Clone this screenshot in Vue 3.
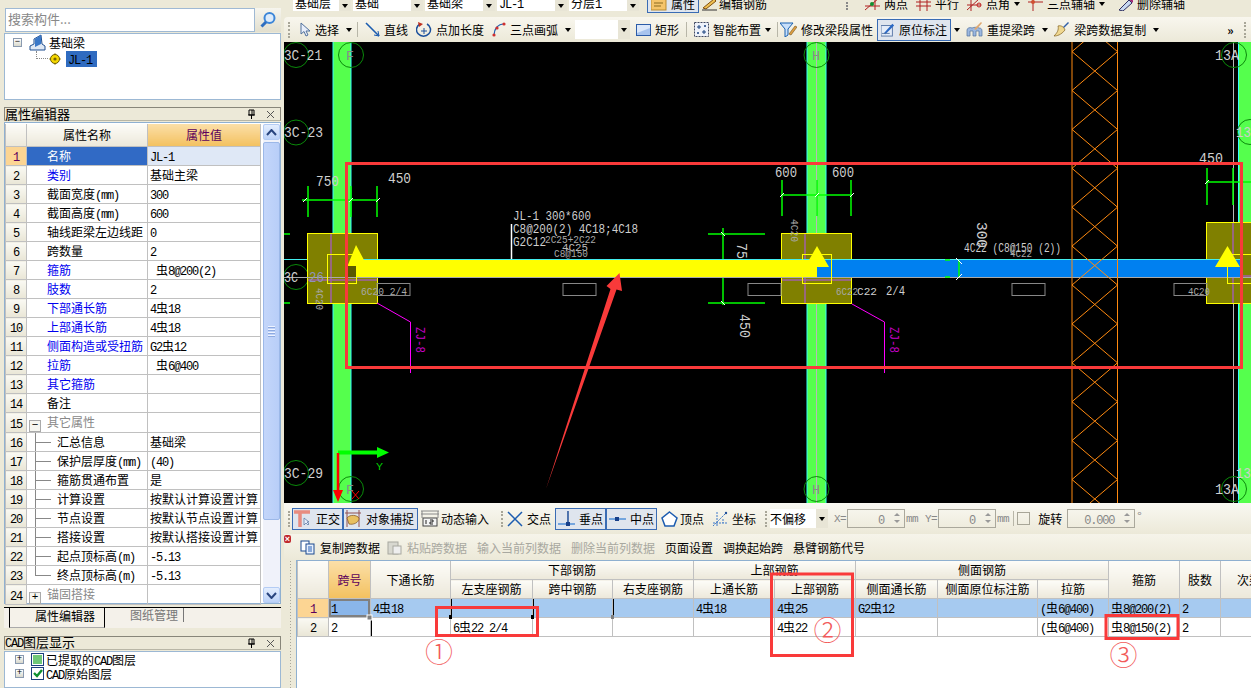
<template>
  <div class="app">
    <!-- left dock -->
    <aside class="left">
      <div class="search-row">
        <div class="search-input">搜索构件...</div>
        <div class="search-btn">
          <svg width="18" height="18" viewBox="0 0 18 18"><circle cx="10.5" cy="7" r="5" fill="#dcebfb" stroke="#3c86d8" stroke-width="2" /><path d="M7 11 2.5 15.5" stroke="#2f6fc0" stroke-width="3" /></svg>
        </div>
      </div>
      <div class="tree-box">
        <div class="tree-root">
          <span class="exp">−</span>
          <svg class="beam-ico" width="17" height="17" viewBox="0 0 17 17"><path d="M1 16V12L5 10V5L12 1 13 10 16 12V16Z" fill="#dfe8f4" stroke="#1f4f90" /><path d="M6 5 12 1V10L6 13Z" fill="#3a78c8" /></svg>
          <span>基础梁</span>
        </div>
        <div class="tree-child">
          <span class="dots"></span>
          <svg width="12" height="12" viewBox="0 0 12 12"><circle cx="6" cy="6" r="4.5" fill="#f5d800" stroke="#6b5a00" /><circle cx="6" cy="6" r="1.6" fill="#7a6400" /><path d="M6 0V12M0 6H12" stroke="#8a7400" stroke-width=".8" stroke-dasharray="1.5 9" /></svg>
          <span class="tree-sel"><Tx s="JL-1" /></span>
        </div>
      </div>

      <div class="dock-title dock-title-a">
        <span>属性编辑器</span>
        <span class="dock-btns">
          <svg width="9" height="10" viewBox="0 0 9 10"><path d="M2 1H7V6H2ZM1 6H8M4.5 6V10" fill="none" stroke="#000" /><path d="M5 1V6" stroke="#000" /></svg>
          <svg width="9" height="9" viewBox="0 0 9 9"><path d="M1 1 8 8M8 1 1 8" stroke="#555" /></svg>
        </span>
      </div>

      <div class="grid-box">
        <table class="pgrid">
          <colgroup><col class="pc-a" /><col class="pc-b" /><col class="pc-c" /></colgroup>
          <thead>
            <tr>
              <th class="corner"></th>
              <th>属性名称</th>
              <th class="sel-head">属性值</th>
            </tr>
          </thead>
          <tbody>
            <tr v-for="(p, i) in props" :key="i">
              <td class="rh" :class="{ 'rh-sel': i === 0 }"><Tx :s="i + 1" /></td>
              <td
                class="pn"
                :class="{ blue: p.blue, gray: p.group, sub: p.sub, last: p.last, named: i === 0 }"
              >
                <span v-if="p.group" class="gbox">{{ p.group }}</span>
                <Tx :s="p.n" />
              </td>
              <td class="pv" :class="{ named: i === 0 }"><Tx :s="p.v" /></td>
            </tr>
          </tbody>
        </table>
        <div class="vscroll">
          <div class="sb-btn"><svg width="11" height="7" viewBox="0 0 11 7"><path d="M1 6 5.5 1 10 6" fill="none" stroke="#29457f" stroke-width="2" /></svg></div>
          <div class="sb-thumb"><span></span><span></span><span></span><span></span></div>
          <div class="sb-space"></div>
          <div class="sb-btn"><svg width="11" height="7" viewBox="0 0 11 7"><path d="M1 1 5.5 6 10 1" fill="none" stroke="#29457f" stroke-width="2" /></svg></div>
        </div>
      </div>

      <div class="tabs">
        <div class="tab tab-on">属性编辑器</div>
        <div class="tab tab-off">图纸管理</div>
      </div>

      <div class="dock-title dock-title-b">
        <span><Tx s="CAD图层显示" /></span>
        <span class="dock-btns">
          <svg width="9" height="10" viewBox="0 0 9 10"><path d="M2 1H7V6H2ZM1 6H8M4.5 6V10" fill="none" stroke="#000" /><path d="M5 1V6" stroke="#000" /></svg>
          <svg width="9" height="9" viewBox="0 0 9 9"><path d="M1 1 8 8M8 1 1 8" stroke="#555" /></svg>
        </span>
      </div>
      <div class="cad-box">
        <div class="cad-row">
          <span class="exp">+</span><span class="cad-check"><i class="cad-fill"></i></span><span><Tx s="已提取的CAD图层" /></span>
        </div>
        <div class="cad-row">
          <span class="exp">+</span>
          <span class="cad-check">
            <svg width="10" height="10" viewBox="0 0 10 10"><path d="M1 5 4 8 9 2" fill="none" stroke="#109030" stroke-width="2.4" /></svg>
          </span><span><Tx s="CAD原始图层" /></span>
        </div>
      </div>
    </aside>

    <main class="right">
      <!-- toolbars clipped by the window top -->
      <div class="bar-clip">
        <div v-for="s in topSelects" :key="s.t" class="tsel" :class="s.c">
          <span><Tx :s="s.t" /></span><b class="drop"><i></i></b>
        </div>
        <div class="ti ti-on attr">
          <svg width="16" height="14" viewBox="0 0 16 14"><rect y="1" width="15" height="12" fill="#f5c46a" stroke="#b98a30" /><path d="M3 6H12M3 9H10" stroke="#8a6a20" /></svg>属性
        </div>
        <div class="ti edit">
          <svg width="16" height="14" viewBox="0 0 16 14"><path d="M1 11 12 2 14 4 4 12Z" fill="#f0c050" stroke="#805010" /><path d="M0 13H15" stroke="#333" /></svg>编辑钢筋
        </div>
        <span class="vdots"></span>
        <div class="ti two">
          <svg width="15" height="14" viewBox="0 0 15 14"><path d="M0 13 14 1M10 0V13M0 9H15" stroke="#b02020" fill="none" /><circle cx="7" cy="7" r="2" fill="#109030" /></svg>两点
        </div>
        <div class="ti">
          <svg width="15" height="14" viewBox="0 0 15 14"><path d="M0 5H15M0 9H15M4 0V14M11 0V14" stroke="#b02020" /></svg>平行
        </div>
        <div class="ti">
          <svg width="15" height="14" viewBox="0 0 15 14"><path d="M0 13 12 2M4 0V14M0 8H14" stroke="#b02020" fill="none" /><circle cx="12" cy="8" r="2" fill="none" stroke="#c02020" /></svg>点角<u class="arr"></u>
        </div>
        <div class="ti">
          <svg width="15" height="14" viewBox="0 0 15 14"><path d="M5 0V14M0 5H15" stroke="#b02020" /><circle cx="5" cy="5" r="2" fill="#d05030" /></svg>三点辅轴<u class="arr"></u>
        </div>
        <div class="ti del">
          <svg width="15" height="14" viewBox="0 0 15 14"><path d="M1 13 11 3 14 6 5 14Z" fill="#c8d8f0" stroke="#303060" /><path d="M10 0 15 5" stroke="#a02070" stroke-width="2" /></svg>删除辅轴
        </div>
      </div>

      <div class="bar-main">
        <span class="grip"></span>
        <div class="ti ti-sel">
          <svg width="12" height="16" viewBox="0 0 12 16"><path d="M2 1V12L5 9.500 7 14 9 13 7 9H11Z" fill="#e8eefa" stroke="#50709c" /></svg>
          <span>选择</span><u class="arr a9"></u>
        </div>
        <span class="vsep"></span>
        <div class="ti">
          <svg width="15" height="15" viewBox="0 0 15 15"><path d="M1 1 14 14" stroke="#1c5cb0" stroke-width="1.600" /><path d="M14 14 13 9M14 14 9 13" stroke="#1c5cb0" /></svg>直线
        </div>
        <div class="ti">
          <svg width="16" height="16" viewBox="0 0 16 16"><path d="M4 2A7 6.500 0 1 0 11 2" fill="none" stroke="#1a4f9c" stroke-width="1.500" /><path d="M2 0 7 2 3 5" fill="#c03020" /><path d="M8 6V12M5 9H11" stroke="#1a4f9c" /></svg>点加长度
        </div>
        <div class="ti">
          <svg width="14" height="15" viewBox="0 0 14 15"><path d="M2 13C2 7 6 2 12 2" fill="none" stroke="#2060b0" stroke-width="1.200" /><circle cx="2" cy="13" r="1.600" fill="#d03030" /><circle cx="5" cy="6" r="1.600" fill="#d03030" /><circle cx="12" cy="2" r="1.600" fill="#d03030" /></svg>
          <span>三点画弧</span><u class="arr a9"></u>
        </div>
        <div class="tb-combo"><b class="drop"><i></i></b></div>
        <div class="ti">
          <svg width="15" height="12" viewBox="0 0 15 12"><rect x=".5" y=".5" width="14" height="11" fill="#a8c4ee" stroke="#2c5ca8" /><path d="M1 1H14V4L1 9Z" fill="#dce8fa" /></svg>矩形
        </div>
        <span class="vsep"></span>
        <div class="ti">
          <svg width="15" height="15" viewBox="0 0 15 15"><rect x=".5" y=".5" width="14" height="14" fill="#eef2fa" stroke="#404860" stroke-dasharray="2 1" /><path d="M5 3V7M3 5H7M10 8V12M8 10H12M11 3V5M10 4H12M4 10V12M3 11H5" stroke="#18407c" /></svg>
          智能布置<u class="arr"></u>
        </div>
        <span class="vsep v2"></span>
        <div class="ti m3">
          <svg width="17" height="15" viewBox="0 0 17 15"><path d="M0 1H13L8 7V13L5 15V7Z" fill="#c8e0fa" stroke="#1860b0" /><path d="M9 12 15 4 17 5 11 13Z" fill="#e0a040" stroke="#705020" stroke-width=".6" /></svg>修改梁段属性
        </div>
        <div class="ti ti-on yw">
          <svg width="16" height="15" viewBox="0 0 16 15"><rect y="3" width="13" height="12" fill="#e4ecf8" stroke="#5070a0" /><path d="M3 12 13 1 15 3 5 13Z" fill="#2a68c4" /><path d="M1 12H10" stroke="#5070a0" /></svg>原位标注
        </div>
        <u class="arr solo"></u>
        <div class="ti">
          <svg width="17" height="15" viewBox="0 0 17 15"><path d="M1 14V8C1 6 4 5 6 6 8 5 12 5 13 6 15 6 16 7 16 9V14H13V9H10V14H7V9H4V14Z" fill="#9cb8e0" stroke="#50709c" stroke-width=".7" /><path d="M8 7 15 0 16 1 10 8Z" fill="#e0a870" /></svg>
          <span>重提梁跨</span><u class="arr a9"></u>
        </div>
        <div class="ti m3">
          <svg width="17" height="15" viewBox="0 0 17 15"><path d="M10 5 15 0 16 1 11 6Z" fill="#2f5fa8" /><path d="M5 4C8 3 11 5 12 8 8 13 4 14 1 14 4 11 6 8 5 4Z" fill="#f0d890" stroke="#806020" stroke-width=".7" /></svg>
          <span>梁跨数据复制</span><u class="arr a9"></u>
        </div>
        <span class="more">»</span>
        <span class="grip end"></span>
      </div>

      <!-- drawing canvas, coordinates are window pixels -->
      <svg class="canvas" width="967" height="461" viewBox="284 42 967 461">
        <rect x="284" y="42" width="967" height="461" fill="#000" />
        <g v-for="c in cols" :key="c.x">
          <rect :x="c.x" y="42" :width="c.w" height="461" fill="#55ff4d" />
          <path :d="`M${c.x} 42V503M${c.x + c.w} 42V503`" stroke="#3ff" fill="none" />
        </g>
        <path d="M816.500 42V503M1233.500 42V503" stroke="#b8b8b8" />
        <path d="M284 259.500H1251" stroke="#4ee" />
        <path d="M284 277.500H1251" stroke="#aaa" />

        <g fill="none" stroke="#0a8a0a">
          <circle v-for="[x, y, r] in bubbles" :key="x + '-' + y" :cx="x" :cy="y" :r="r" />
        </g>

        <!-- columns caps -->
        <g v-for="b in blocks" :key="b.x">
          <rect :x="b.x" :y="b.y" :width="b.w" :height="b.h" fill="#808000" stroke="#ff0" />
          <path :d="b.p" stroke="#a060a8" stroke-width="1.500" fill="none" />
        </g>

        <!-- beams -->
        <rect x="356" y="260" width="461" height="17" fill="#ff0" />
        <rect x="817" y="260" width="423" height="17" fill="#0080f0" />
        <path d="M284 277.500H1251" stroke="#aaa" />
        <path d="M356 259.500H1240" stroke="#4ee" />
        <g fill="none" stroke="#ff0">
          <rect v-for="b in blocks" :key="b.ix" :x="b.ix" y="254.500" :width="b.iw" height="29" />
        </g>
        <rect x="348" y="266" width="8" height="11" fill="#5a5a00" />
        <path d="M356 245 347.500 266H356V260H364Z" fill="#ff0" />
        <path d="M817 246 805 267H829Z" fill="#ff0" />
        <path d="M1227.500 246 1215 267H1240Z" fill="#ff0" />

        <!-- hatch -->
        <g stroke="#ff8a10" fill="none">
          <path d="M1072 42V503M1117.500 42V503" />
          <path v-for="(d, i) in hatch" :key="i" :d="d" />
        </g>

        <!-- dimensions -->
        <g stroke="#0f0" stroke-width="1.500" fill="none">
          <path d="M302 200H378M308 186V217M351 186V217M377 186V217" />
          <path d="M781 195H852M782 180V216M817 180V216M851 180V216" />
          <path d="M1206 182H1251M1207 168V205M1233 168V205" />
          <path d="M708 234H765M708 303H765M723 228V259M723 278V305M284 234H290M284 303H290" />
          <path d="M945 260H950M945 277H950M959 260V277" />
        </g>
        <g stroke="#fff">
          <path d="M303 202 307 198M349 202 353 198M376 202 380 198M780 197 784 193M815 197 819 193M850 197 854 193M1205 184 1209 180M721 232 725 236M721 301 725 305M956 258 962 264M956 280 962 274" />
          <path d="M511.500 224V259" stroke-width="1.500" />
        </g>

        <!-- rebar marks boxes -->
        <g fill="none" stroke="#888">
          <rect v-for="x in markBoxes" :key="x" :x="x" y="283.500" width="33" height="12" />
        </g>

        <!-- ZJ leaders -->
        <path d="M377 303 410.500 322V373M852 304 884.500 322V373" fill="none" stroke="#f0f" />

        <text
          v-for="(t, i) in labels"
          :key="i"
          :x="t.x"
          :y="t.y"
          :font-size="t.fs || 12"
          :fill="t.c || '#cfcfcf'"
          :textLength="t.w"
          lengthAdjust="spacingAndGlyphs"
          :transform="t.r ? `rotate(90 ${t.x} ${t.y})` : null"
          class="cad-text"
        >{{ t.s }}</text>

        <!-- ucs -->
        <path d="M338 452.500H378" stroke="#0f0" stroke-width="4" />
        <path d="M377 447 389 452.500 377 458Z" fill="#0f0" />
        <path d="M338 453V492" stroke="#f00" stroke-width="2.500" />
        <path d="M333 490 338 502 343 490Z" fill="#f00" />
        <path d="M352 491 359 499M359 491 352 499" stroke="#f00" />

        <!-- markup -->
        <rect x="346.500" y="163.500" width="895" height="204" fill="none" stroke="#f93a3a" stroke-width="3" />
        <path d="M546 489 610.500 289 606.500 286 619.500 273 622 291 616.500 289.500Z" fill="#f93a3a" />
      </svg>

      <!-- snap bar -->
      <div class="bar-snap">
        <span class="grip"></span>
        <div class="ti ti-on s-a">
          <svg width="18" height="17" viewBox="0 0 18 17"><path d="M0 2H16M6 2V17" stroke="#e88c80" stroke-width="3.500" /><path d="M10 8V15L12 13 14 15 15 14 13 12H15Z" fill="#e8eefa" stroke="#50709c" stroke-width=".7" /></svg>正交
        </div>
        <div class="ti ti-on s-b">
          <svg width="18" height="17" viewBox="0 0 18 17"><path d="M1 3H17M3 0V17M15 0V17" stroke="#905050" /><path d="M3 8C6 4 13 5 15 8 15 13 9 15 5 14Z" fill="#e8c060" stroke="#805020" stroke-width=".7" /></svg>对象捕捉
        </div>
        <div class="ti s-c">
          <svg width="18" height="17" viewBox="0 0 18 17"><path d="M0 1H18M0 4H18" stroke="#888" /><path d="M1 1V8M17 1V8" stroke="#888" /><rect x="2" y="8" width="14" height="8" fill="#f4f4f4" stroke="#444" /><path d="M5 10V14M9 10H12V12H9V14H12" stroke="#222" fill="none" /></svg>动态输入
        </div>
        <span class="grip g2"></span>
        <div class="ti">
          <svg width="16" height="16" viewBox="0 0 16 16"><path d="M1 1 15 15M15 1 1 15" stroke="#1c5cb0" stroke-width="1.500" /></svg>交点
        </div>
        <div class="ti ti-on s-d">
          <svg width="17" height="16" viewBox="0 0 17 16"><path d="M0 13H17" stroke="#5090d8" stroke-width="1.500" /><path d="M10 0V13" stroke="#204f98" stroke-width="1.500" /><rect x="8" y="11" width="4" height="4" fill="#18408a" /></svg>垂点
        </div>
        <div class="ti ti-on s-d">
          <svg width="17" height="16" viewBox="0 0 17 16"><path d="M0 8H17" stroke="#5090d8" stroke-width="1.500" /><rect x="6" y="6" width="4" height="4" fill="#18408a" /></svg>中点
        </div>
        <div class="ti s-e">
          <svg width="17" height="16" viewBox="0 0 17 16"><path d="M8.500 1 16 7 13 15H4L1 7Z" fill="#fff" stroke="#1c5cb0" stroke-width="1.500" /></svg>顶点
        </div>
        <div class="ti s-f">
          <svg width="17" height="16" viewBox="0 0 17 16"><path d="M1 12H16M5 1V16M1 15 14 2M11 8V12" stroke="#3e78c8" stroke-dasharray="2 1" fill="none" /><circle cx="14" cy="2" r="1.200" fill="#204f98" /></svg>坐标
        </div>
        <span class="grip g3"></span>
        <div class="offset"><span>不偏移</span><b class="drop"><i></i></b></div>
        <span class="mut lat-m xl">X=</span>
        <div class="spin"><span class="lat">0</span><em></em></div>
        <span class="mut lat-m">mm</span>
        <span class="mut lat-m yl">Y=</span>
        <div class="spin"><span class="lat">0</span><em></em></div>
        <span class="mut lat-m">mm</span>
        <span class="vsep v3"></span>
        <span class="chk"></span>
        <span class="rot">旋转</span>
        <div class="spin spin-r"><span class="lat">0.000</span><em></em></div>
        <span class="mut deg">°</span>
      </div>

      <!-- table toolbar -->
      <div class="bar-table">
        <span class="close-x">×</span>
        <span class="ta on">
          <svg width="16" height="15" viewBox="0 0 16 15"><rect x="1" y="1" width="8" height="10" fill="#fff" stroke="#1c4a90" /><rect x="6" y="4" width="8" height="10" fill="#e8f0fc" stroke="#1c4a90" /><path d="M8 7H12M8 9H12M8 11H12" stroke="#2a62b8" /></svg>复制跨数据
        </span>
        <span class="ta off pa">
          <svg width="16" height="15" viewBox="0 0 16 15"><rect x="1" y="2" width="10" height="12" fill="#d8d8d0" stroke="#a8a8a0" /><rect x="6" y="6" width="8" height="8" fill="#eee" stroke="#a8a8a0" /></svg>粘贴跨数据
        </span>
        <span class="ta off">输入当前列数据</span>
        <span class="ta off">删除当前列数据</span>
        <span class="ta on">页面设置</span>
        <span class="ta on">调换起始跨</span>
        <span class="ta on">悬臂钢筋代号</span>
      </div>

      <div class="table-zone">
        <div class="splitter"></div>
        <div class="table-wrap">
          <table class="span-table">
            <colgroup><col v-for="w in colWidths" :key="w.k" :style="{ width: w.v + 'px' }" /></colgroup>
            <thead>
              <tr>
                <th rowspan="2"></th>
                <th rowspan="2" class="sel-head">跨号</th>
                <th rowspan="2">下通长筋</th>
                <th colspan="3">下部钢筋</th>
                <th colspan="2">上部钢筋</th>
                <th colspan="3">侧面钢筋</th>
                <th rowspan="2">箍筋</th>
                <th rowspan="2">肢数</th>
                <th rowspan="2" class="cut"><span>次梁加筋</span></th>
              </tr>
              <tr>
                <th>左支座钢筋</th>
                <th>跨中钢筋</th>
                <th>右支座钢筋</th>
                <th>上通长筋</th>
                <th>上部钢筋</th>
                <th>侧面通长筋</th>
                <th>侧面原位标注筋</th>
                <th>拉筋</th>
              </tr>
            </thead>
            <tbody>
              <tr v-for="(r, i) in spans" :key="i" :class="{ on: i === 0 }">
                <td class="rh" :class="{ 'rh-sel': i === 0 }"><Tx :s="i + 1" /></td>
                <td :class="{ cur: i === 0 }"><Tx :s="i + 1" /></td>
                <td
                  v-for="(v, j) in r"
                  :key="j"
                  :class="{ tick: i === 0 ? j === 1 || j === 2 || j === 3 : j === 0 }"
                ><Tx :s="v" /></td>
              </tr>
            </tbody>
          </table>
        </div>
      </div>
    </main>

    <!-- hand-drawn markup on top of the table -->
    <svg class="markup" width="1251" height="688" viewBox="0 0 1251 688">
      <rect x="367" y="615" width="5" height="5" fill="#808080" stroke="#fff" />
      <rect x="449" y="615" width="3" height="4" fill="#000" />
      <rect x="531" y="615" width="3" height="4" fill="#000" />
      <rect x="611" y="615" width="3" height="4" fill="#808080" />
      <g fill="none" stroke="#f93a3a" stroke-width="3">
        <rect x="436.500" y="607.500" width="101" height="28" />
        <rect x="771.500" y="574" width="81" height="81.500" />
        <rect x="1106" y="615.500" width="72" height="23" />
      </g>
      <g class="circled" fill="#f25a5a">
        <text x="425" y="663">①</text>
        <text x="813.500" y="641">②</text>
        <text x="1109.500" y="666">③</text>
      </g>
    </svg>
  </div>
</template>

<script setup>
import { h } from "vue";

// cjk and latin sit at different widths so the latin comes out half-width
const Tx = ({ s }) =>
  String(s)
    .split(/([\x20-\x7e]+)/)
    .filter(Boolean)
    .map((p) => (/^[\x20-\x7e]+$/.test(p) ? h("span", { class: "lat" }, p) : p));
Tx.props = ["s"];

const props = [
  { n: "名称", v: "JL-1" },
  { n: "类别", v: "基础主梁", blue: true },
  { n: "截面宽度(mm)", v: "300" },
  { n: "截面高度(mm)", v: "600" },
  { n: "轴线距梁左边线距", v: "0" },
  { n: "跨数量", v: "2" },
  { n: "箍筋", v: " 虫8@200(2)", blue: true },
  { n: "肢数", v: "2", blue: true },
  { n: "下部通长筋", v: "4虫18", blue: true },
  { n: "上部通长筋", v: "4虫18", blue: true },
  { n: "侧面构造或受扭筋", v: "G2虫12", blue: true },
  { n: "拉筋", v: " 虫6@400", blue: true },
  { n: "其它箍筋", v: "", blue: true },
  { n: "备注", v: "" },
  { n: "其它属性", v: "", group: "−" },
  { n: "汇总信息", v: "基础梁", sub: true },
  { n: "保护层厚度(mm)", v: "(40)", sub: true },
  { n: "箍筋贯通布置", v: "是", sub: true },
  { n: "计算设置", v: "按默认计算设置计算", sub: true },
  { n: "节点设置", v: "按默认节点设置计算", sub: true },
  { n: "搭接设置", v: "按默认搭接设置计算", sub: true },
  { n: "起点顶标高(m)", v: "-5.13", sub: true },
  { n: "终点顶标高(m)", v: "-5.13", sub: true, last: true },
  { n: "锚固搭接", v: "", group: "+" },
];

const topSelects = [
  { t: "基础层", c: "s1" },
  { t: "基础", c: "" },
  { t: "基础梁", c: "" },
  { t: "JL-1", c: "" },
  { t: "分层1", c: "" },
];

const cols = [
  { x: 333, w: 18 },
  { x: 807, w: 19 },
  { x: 1238.5, w: 13 },
];

const bubbles = [
  [296, 55, 12.5],
  [296, 132.5, 12.5],
  [296, 277, 12.5],
  [296, 473, 12.5],
  [351, 55, 12.5],
  [816.5, 55, 12.5],
  [351, 489, 12.5],
  [816.5, 489, 12.5],
  [1234, 55, 12.5],
  [1250, 132, 12.5],
  [1234, 489, 12.5],
];

const blocks = [
  { x: 307.5, y: 233.5, w: 70, h: 70, ix: 327.5, iw: 29, p: "M331 234V303M308 280H377" },
  { x: 781.5, y: 233.5, w: 70, h: 70, ix: 802.5, iw: 29, p: "M805 234V303M782 280H851" },
  { x: 1206.5, y: 222.5, w: 50, h: 81, ix: 1227.5, iw: 30, p: "M1233 223V303M1207 276H1251" },
];

const markBoxes = [377, 563, 748, 1012, 1174];

// diamond lattice of the hatched area
const hatch = [];
for (let k = -1; k < 12; k++) {
  const a = 51.6 + 38.9 * k;
  const b = a + 38.9;
  hatch.push(`M1072 ${a}L1117.5 ${b}`, `M1117.5 ${a}L1072 ${b}`);
}

const labels = [
  { s: "3C-21", x: 284, y: 60, fs: 14, w: 38 },
  { s: "3C-23", x: 284, y: 137, fs: 14, w: 39 },
  { s: "3C", x: 284, y: 282, fs: 14, w: 14 },
  { s: "26", x: 309, y: 282, fs: 14, w: 15, c: "#8f93b8" },
  { s: "3C-29", x: 284, y: 478, fs: 14, w: 39 },
  { s: "F", x: 346, y: 60, fs: 13, w: 8, c: "#8a8a8a" },
  { s: "H", x: 812, y: 60, fs: 13, w: 8, c: "#8a8a8a" },
  { s: "F", x: 346, y: 494, fs: 13, w: 8, c: "#8a8a8a" },
  { s: "H", x: 812, y: 494, fs: 13, w: 8, c: "#8a8a8a" },
  { s: "13A", x: 1215, y: 60, fs: 14, w: 24 },
  { s: "13", x: 1236, y: 137, fs: 14, w: 15 },
  { s: "13", x: 1236, y: 478, fs: 14, w: 15 },
  { s: "13A", x: 1215, y: 494, fs: 14, w: 24 },
  { s: "750", x: 316, y: 186, fs: 14, w: 23 },
  { s: "450", x: 388, y: 183, fs: 14, w: 23 },
  { s: "600", x: 775, y: 177, fs: 14, w: 22 },
  { s: "600", x: 832, y: 177, fs: 14, w: 22 },
  { s: "450", x: 1199, y: 163, fs: 14, w: 24 },
  { s: "JL-1 300*600", x: 513, y: 220, w: 78 },
  { s: "C8@200(2) 4C18;4C18", x: 513, y: 233, w: 125 },
  { s: "G2C12", x: 513, y: 246, w: 33 },
  { s: "2C25+2C22", x: 545, y: 243, fs: 11, w: 51, c: "#a8a8a8" },
  { s: "4C25", x: 562, y: 251, fs: 11, w: 26, c: "#bbb" },
  { s: "C8@150", x: 554, y: 257, fs: 11, w: 34, c: "#a8a8a8" },
  { s: "6C20 2/4", x: 361, y: 295, fs: 11, w: 46, c: "#a8a8a8" },
  { s: "4C20", x: 316, y: 288, fs: 11, w: 22, r: true, c: "#a8a8a8" },
  { s: "4C20", x: 791, y: 219, fs: 11, w: 23, r: true, c: "#a8a8a8" },
  { s: "6C22", x: 836, y: 295, fs: 11, w: 22, c: "#a8a8a8" },
  { s: "C22", x: 857, y: 295, fs: 11, w: 20, c: "#d0d0d0" },
  { s: "2/4", x: 886, y: 295, w: 19 },
  { s: "4C22 (C8@150 (2))", x: 964, y: 252, w: 97 },
  { s: "4C22", x: 1010, y: 257, fs: 11, w: 22, c: "#a8a8a8" },
  { s: "300", x: 977, y: 222, fs: 14, w: 26, r: true },
  { s: "4C20", x: 1188, y: 295, fs: 11, w: 22, c: "#a8a8a8" },
  { s: "75", x: 737, y: 243, fs: 14, w: 16, r: true },
  { s: "450", x: 740, y: 314, fs: 14, w: 24, r: true },
  { s: "ZJ-8", x: 416, y: 327, fs: 12, w: 26, r: true, c: "#c800c8" },
  { s: "ZJ-8", x: 890, y: 327, fs: 12, w: 26, r: true, c: "#c800c8" },
  { s: "Y", x: 376, y: 470, fs: 11, w: 7, c: "#0c0" },
];

const colWidths = [31, 42, 80, 82, 80, 81, 81, 81, 82, 100, 71, 71, 41, 31].map((v, k) => ({ k, v }));

const spans = [
  ["4虫18", "", "", "", "4虫18", "4虫25", "G2虫12", "", "(虫6@400)", "虫8@200(2)", "2", ""],
  ["", "6虫22 2/4", "", "", "", "4虫22", "", "", "(虫6@400)", "虫8@150(2)", "2", ""],
];
</script>

<style>
body {
  margin: 0;
  overflow: hidden;
}
.lat {
  font-family: "Liberation Mono", monospace;
  font-size: 12px;
  line-height: 1;
  letter-spacing: -1.2px;
  white-space: pre;
}
</style>

<style scoped>
.app {
  position: relative;
  display: flex;
  width: 1251px;
  height: 688px;
  overflow: hidden;
  background: #ece9d8;
  font: 12px "Noto Sans CJK SC", sans-serif;
  color: #000;
}
.left {
  width: 284px;
  flex: none;
  box-sizing: border-box;
  padding: 8px 3px 0 4px;
  display: flex;
  flex-direction: column;
}
.search-row {
  display: flex;
  height: 24px;
}
.search-input {
  width: 250px;
  margin-left: 1px;
  box-sizing: border-box;
  border: 1px solid #9fb9d4;
  background: #fff;
  color: #888;
  font-size: 13px;
  line-height: 19px;
  padding-left: 2px;
}
.search-btn {
  flex: 1;
  display: flex;
  align-items: center;
  justify-content: center;
  background: linear-gradient(#f6f5ee, #e2dfce);
}
.tree-box {
  height: 67px;
  margin-top: 1px;
  box-sizing: border-box;
  border: 1px solid #9cb8d4;
  background: #fff;
}
.tree-root {
  display: flex;
  align-items: center;
  height: 17px;
  padding-left: 8px;
}
.exp {
  display: inline-block;
  box-sizing: border-box;
  width: 9px;
  height: 9px;
  border: 1px solid #8a9ab0;
  background: linear-gradient(#fff, #d8d8cc);
  font: 9px/7px "Liberation Mono", monospace;
  text-align: center;
  color: #000;
  flex: none;
}
.beam-ico {
  margin: 0 3px 0 7px;
}
.tree-child {
  display: flex;
  align-items: center;
  height: 16px;
  padding-left: 31px;
}
.dots {
  width: 12px;
  height: 8px;
  margin-top: -8px;
  margin-right: 1px;
  border-left: 1px dotted #888;
  border-bottom: 1px dotted #888;
  flex: none;
  box-sizing: border-box;
}
.tree-sel {
  background: #2f6bc0;
  margin-left: 5px;
  width: 31px;
  height: 16px;
  line-height: 16px;
  padding-left: 2px;
  box-sizing: border-box;
}
.dock-title {
  display: flex;
  justify-content: space-between;
  align-items: center;
  height: 14px;
  box-sizing: border-box;
  border: 1px solid #88867a;
  border-bottom-color: #b8b6a6;
  font-size: 13px;
  line-height: 12px;
}
.dock-title-a {
  margin-top: 7px;
}
.dock-btns {
  display: flex;
  gap: 10px;
  align-items: center;
  padding-right: 5px;
}
.grid-box {
  position: relative;
  height: 482px;
  margin-top: 1px;
  box-sizing: border-box;
  border: 1px solid #8fb0d0;
  background: #fff;
  display: flex;
  padding-top: 1px;
}
.pgrid {
  width: 255px;
  table-layout: fixed;
  border-collapse: collapse;
  align-self: flex-start;
}
.pc-a {
  width: 21px;
}
.pc-b {
  width: 121px;
}
.pc-c {
  width: 113px;
}
.pgrid th,
.pgrid td {
  border: 1px solid #c0c0c0;
  padding: 0;
  font-weight: 400;
  height: 18px;
  line-height: 18px;
  white-space: nowrap;
  overflow: hidden;
}
.pgrid th {
  height: 22px;
  background: linear-gradient(#fdfcf8, #ece8da);
  border-top: 0;
}
.pgrid .sel-head {
  background: linear-gradient(#fbdfa8, #f3c160);
  color: #5c005c;
}
.rh {
  background: linear-gradient(#faf9f3, #e9e6d6);
  text-align: center;
}
.rh-sel {
  background: #fcd593;
  color: #5c005c;
}
.pn {
  position: relative;
  padding-left: 20px !important;
}
.pn.blue {
  color: #0000f0;
}
.pn.gray {
  color: #888;
  padding-left: 2px !important;
}
.pn.named {
  background: #316ac5;
  color: #fff;
}
.pv.named {
  background: #dfe8f6;
}
.pv {
  padding-left: 2px !important;
}
.gbox {
  display: inline-block;
  box-sizing: border-box;
  width: 12px;
  height: 12px;
  border: 1px solid #aaa;
  background: #f6f6f0;
  color: #000;
  font: 11px/9px "Liberation Mono", monospace;
  text-align: center;
  margin: 0 6px 0 0;
  vertical-align: -1px;
}
.pn.sub {
  padding-left: 30px !important;
}
.pn.sub::before {
  content: "";
  position: absolute;
  left: 8px;
  top: 9px;
  width: 16px;
  border-top: 1px solid #888;
}
.pn.sub::after {
  content: "";
  position: absolute;
  left: 8px;
  top: 0;
  height: 19px;
  border-left: 1px solid #888;
}
.pn.last::after {
  height: 9px;
}
.vscroll {
  width: 18px;
  margin-left: 2px;
  height: 479px;
  display: flex;
  flex-direction: column;
  background: #f0f2fa;
}
.sb-btn {
  height: 16px;
  flex: none;
  box-sizing: border-box;
  border: 1px solid #b4ccf4;
  border-radius: 2px;
  background: linear-gradient(#e4eefe, #bcd2f8);
  display: flex;
  align-items: center;
  justify-content: center;
}
.sb-thumb {
  height: 378px;
  margin-top: 2px;
  flex: none;
  box-sizing: border-box;
  border: 1px solid #9cb8e8;
  border-radius: 2px;
  background: linear-gradient(90deg, #c4d6fa, #b8cef8);
  display: flex;
  flex-direction: column;
  align-items: center;
  justify-content: center;
  gap: 1px;
}
.sb-thumb span {
  width: 7px;
  height: 1px;
  background: #eef3ff;
  border-bottom: 1px solid #8eaae0;
}
.sb-space {
  flex: 1;
}
.tabs {
  display: flex;
  height: 21px;
  background: #f4f1ea;
  margin-top: 3px;
  border-top: 1px solid #000;
  box-sizing: border-box;
  flex: none;
}
.tab-on {
  margin-left: 5px;
  box-sizing: border-box;
  background: #f5f2ea;
  border-left: 1px solid #000;
  border-right: 1px solid #000;
  border-bottom: 1px solid #aaa;
  line-height: 15px;
  margin-right: 25px;
  padding-left: 25px;
  white-space: nowrap;
  width: 96px;
}
.tab-off {
  color: #777;
  padding-right: 5px;
  border-right: 1px solid #777;
  height: 14px;
  line-height: 14px;
}
.dock-title-b {
  margin-top: 8px;
}
.cad-box {
  flex: 1;
  margin-top: 1px;
  border: 1px solid #9cb8d4;
  background: #fff;
}
.cad-row {
  display: flex;
  align-items: center;
  height: 14px;
  padding-left: 10px;
}
.cad-check {
  width: 11px;
  height: 11px;
  margin: 0 2px 0 7px;
  border: 1px solid #1c3f7c;
  display: flex;
  align-items: center;
  justify-content: center;
  flex: none;
}
.cad-fill {
  width: 9px;
  height: 9px;
  background: #70c878;
}

.right {
  flex: 1;
  display: flex;
  flex-direction: column;
  min-width: 0;
}
.bar-clip {
  height: 13px;
  display: flex;
  align-items: flex-end;
  padding-left: 9px;
  overflow: hidden;
  flex: none;
  box-sizing: border-box;
}
.tsel {
  width: 70px;
  height: 11px;
  margin: 0 2px 2px 0;
  flex: none;
  background: #fff;
  display: flex;
  justify-content: space-between;
  align-items: flex-end;
  overflow: hidden;
}
.tsel.s1 {
  width: 58px;
}
.tsel span {
  height: 17px;
  line-height: 17px;
  padding-left: 2px;
}
.drop {
  display: flex;
  align-items: center;
  justify-content: center;
  width: 12px;
  height: 100%;
  background: #e8e5d6;
  flex: none;
}
.drop i,
.arr {
  display: block;
  width: 0;
  height: 0;
  border: 3px solid transparent;
  border-top: 4px solid #000;
  border-bottom: 0;
}
.ti {
  display: flex;
  align-items: center;
  flex: none;
  gap: 4px;
  height: 22px;
  padding: 0 4px;
  white-space: nowrap;
}
.arr {
  display: inline-block;
  text-decoration: none;
}
.a9 {
  margin-left: 3px;
}
.m3 {
  margin-left: -3px;
}
.ti-on {
  box-sizing: border-box;
  border: 1px solid #3a6cb4;
  background: #dfe5ee;
}
.bar-clip .ti {
  height: 19px;
}
.bar-clip .attr {
  margin-left: 6px;
  width: 52px;
  padding: 0 3px;
}
.bar-clip .edit {
  margin-left: 1px;
  width: 70px;
  padding: 0 2px;
  gap: 1px;
}
.bar-clip .del {
  margin-left: 5px;
}
.vdots {
  width: 3px;
  height: 8px;
  margin: 0 10px 3px 72px;
  border-left: 2px dotted #888;
  flex: none;
}
.bar-main {
  height: 25px;
  margin-top: 4px;
  display: flex;
  align-items: center;
  padding-left: 4px;
  flex: none;
  background: linear-gradient(#f8f6ee, #ece9d8);
  border-radius: 4px 0 0 0;
}
.grip {
  width: 0;
  height: 16px;
  margin-right: 5px;
  border-left: 2px dotted #a8a698;
  flex: none;
}
.grip.end {
  margin-left: 7px;
}
.ti-sel {
  padding-right: 2px;
}
.vsep {
  width: 1px;
  height: 15px;
  background: #b8b6a8;
  flex: none;
  margin: 0 3px;
}
.vsep.v2 {
  margin: 0 1px 0 2px;
}
.tb-combo {
  width: 55px;
  height: 19px;
  margin-right: 2px;
  background: #fff;
  display: flex;
  justify-content: flex-end;
  flex: none;
}
.yw {
  width: 74px;
  padding: 0 3px;
}
.solo {
  margin: 0 2px 0 3px;
}
.more {
  margin-left: 64px;
  font-size: 12px;
  width: 10px;
  font-weight: 700;
}
.canvas {
  display: block;
  flex: none;
}
.cad-text {
  font-family: "Liberation Mono", monospace;
}
.bar-snap {
  height: 31px;
  box-sizing: border-box;
  padding: 4px 0 4px 4px;
  display: flex;
  align-items: center;
  flex: none;
  background: linear-gradient(#f9f8f2, #ece9d8);
}
.bar-snap > .grip:first-child {
  margin-right: 2px;
}
.s-a {
  width: 51px;
  padding: 0 1px;
}
.s-b {
  width: 75px;
  padding: 0;
}
.s-c {
  padding: 0 2px;
  margin-left: 1px;
  gap: 2px;
}
.s-d {
  width: 51px;
  padding: 0 2px;
}
.s-e {
  gap: 2px;
}
.s-f {
  gap: 3px;
}
.grip.g2 {
  margin: 0 0 0 10px;
}
.grip.g3 {
  margin: 0 3px 0 5px;
}
.offset {
  width: 58px;
  height: 19px;
  background: #fff;
  display: flex;
  justify-content: space-between;
  line-height: 19px;
  flex: none;
  margin-right: 5px;
}
.mut {
  color: #888;
  flex: none;
}
.lat-m {
  font: 11px "Liberation Mono", monospace;
  letter-spacing: -0.6px;
  margin: 0 1px;
}
.yl {
  margin-left: 6px;
}
.spin {
  position: relative;
  width: 58px;
  height: 19px;
  box-sizing: border-box;
  border: 1px solid #aaa89c;
  color: #888;
  text-align: right;
  padding-right: 20px;
  line-height: 17px;
  flex: none;
}
.spin em {
  position: absolute;
  right: 4px;
  top: 3px;
  width: 0;
  height: 0;
  border: 3px solid transparent;
  border-bottom: 3px solid #999;
  border-top: 0;
}
.spin em::after {
  content: "";
  position: absolute;
  left: -3px;
  top: 7px;
  border: 3px solid transparent;
  border-top: 3px solid #999;
  border-bottom: 0;
}
.v3 {
  margin: 0 3px;
}
.chk {
  width: 11px;
  height: 11px;
  border: 1px solid #a8a698;
  flex: none;
}
.rot {
  margin: 0 5px 0 8px;
  flex: none;
}
.spin-r {
  width: 68px;
}
.deg {
  margin-left: 2px;
  margin-top: -6px;
}
.bar-table {
  position: relative;
  height: 26px;
  display: flex;
  align-items: center;
  padding-left: 16px;
  gap: 10px;
  flex: none;
  background: linear-gradient(#f6f4ea, #ece9d8);
}
.close-x {
  position: absolute;
  left: 0;
  top: 1px;
  width: 7px;
  height: 8px;
  background: #c0282c;
  border-radius: 2px;
  color: #fff;
  font: 700 9px/8px "Liberation Sans", sans-serif;
  text-align: center;
}
.ta {
  display: flex;
  align-items: center;
  gap: 4px;
  white-space: nowrap;
  flex: none;
}
.ta.off {
  color: #a8a8a0;
}
.ta.pa {
  margin-left: -3px;
}
.table-zone {
  flex: 1;
  display: flex;
  min-height: 0;
}
.splitter {
  width: 12px;
  flex: none;
  background: radial-gradient(circle, #a8a698 0.8px, transparent 1px) 50% 0 / 3px 3px repeat-y;
}
.table-wrap {
  flex: 1;
  background: #fff;
  border-left: 1px solid #8fb0d0;
  border-top: 1px solid #8fb0d0;
  overflow: hidden;
}
.span-table {
  table-layout: fixed;
  border-collapse: collapse;
  width: 954px;
}
.span-table th,
.span-table td {
  border: 1px solid #c0c0c0;
  padding: 0;
  font-weight: 400;
  height: 18px;
  line-height: 18px;
  white-space: nowrap;
  overflow: hidden;
}
.span-table thead tr:first-child th {
  border-top: 0;
}
.span-table th {
  background: linear-gradient(#fdfcf8, #ece8da);
}
.span-table .sel-head {
  background: linear-gradient(#fbdfa8, #f3c160);
  color: #5c005c;
}
.span-table td {
  padding-left: 2px;
}
.span-table td.rh {
  padding: 0;
}
.span-table tr.on td {
  background: #a6caf0;
}
.span-table tr.on td.rh-sel {
  background: #fcd593;
}
.span-table tr.on td.cur {
  background: #8ab6ea;
  box-shadow: inset 0 0 0 2px #808080;
}
.span-table td.tick {
  box-shadow: inset 1px 0 0 #000;
}
.cut {
  text-align: left;
  padding-left: 16px !important;
}
.markup {
  position: absolute;
  left: 0;
  top: 0;
  pointer-events: none;
}
.circled {
  font: 300 28px "Noto Sans CJK SC", sans-serif;
}
</style>
